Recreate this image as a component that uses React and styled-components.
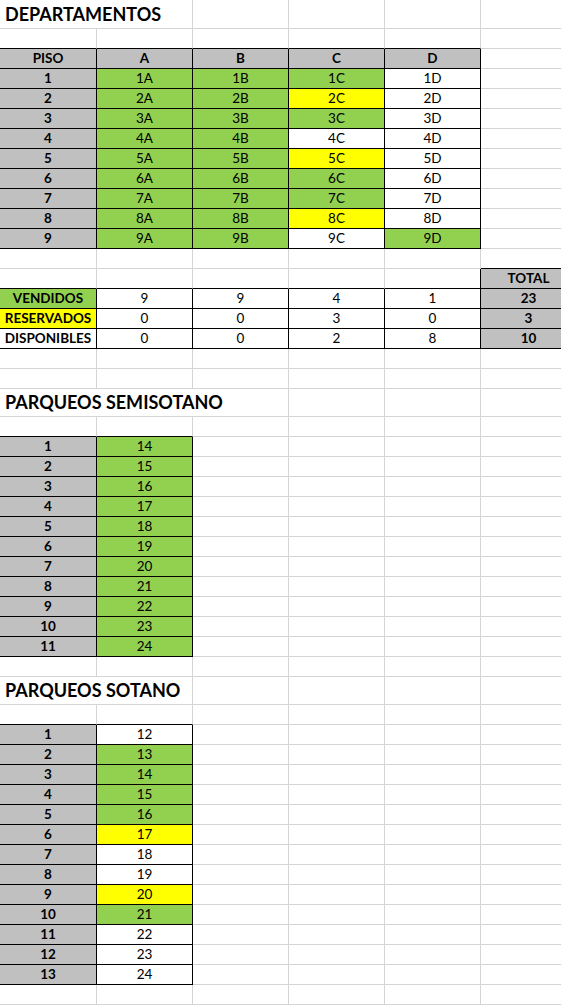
import React from 'react'
import styled, { createGlobalStyle } from 'styled-components'

const GREEN = '#92d050'
const YELLOW = '#ffff00'
const GRAY = '#c0c0c0'
const GRID = '#d4d4d4'

const Global = createGlobalStyle`
  body {
    margin: 0;
    background: #fff;
    overflow: hidden;
  }
`

const Sheet = styled.div`
  width: 561px;
  height: 1005px;
  overflow: hidden;
  font-family: Lato, "Liberation Sans", sans-serif;
  color: #000;
`

const Row = styled.div`
  display: grid;
  grid-template-columns: 97px repeat(5, 96px);
  height: ${p => p.$h}px;
`

const Cell = styled.div`
  box-sizing: border-box;
  grid-column: span ${p => p.$span || 1};
  background: ${p => p.$fill || '#fff'};
  border-right: 1px solid ${p => (p.$rb ? '#000' : GRID)};
  border-bottom: 1px solid ${p => (p.$bb ? '#000' : GRID)};
  font-size: 13.5px;
  font-weight: ${p => (p.$bold ? 700 : 400)};
  display: flex;
  align-items: flex-end;
  justify-content: center;
  padding-bottom: 1px;
  line-height: 17px;
  white-space: nowrap;
`

const Title = styled(Cell)`
  justify-content: flex-start;
  padding-left: 5px;
  padding-bottom: 3px;
  font-size: 18px;
  line-height: 22px;
  font-weight: 700;
`

const dept = [
  'ggg-', 'ggy-', 'ggg-', 'gg--', 'ggy-', 'ggg-', 'ggg-', 'ggy-', 'gg-g'
]
const sotano = 'wggggywwygwww'
const fillOf = c => (c === 'g' ? GREEN : c === 'y' ? YELLOW : undefined)

const blank = () => Array(6).fill(null)
const rows = []
const title = (t, span, h) => {
  const cells = blank()
  cells[0] = { t, span, title: true }
  for (let i = 1; i < span; i++) cells[i] = 'skip'
  rows.push({ h, cells })
}
const empty = () => rows.push({ h: 20, cells: blank() })

title('DEPARTAMENTOS', 2, 29)
empty()
rows.push({
  h: 20,
  cells: ['PISO', 'A', 'B', 'C', 'D'].map(t => ({ t, bold: true, fill: GRAY, box: true })).concat([null])
})
dept.forEach((r, i) => {
  rows.push({
    h: 20,
    cells: [{ t: String(i + 1), bold: true, fill: GRAY, box: true }]
      .concat(['A', 'B', 'C', 'D'].map((l, j) => ({ t: `${i + 1}${l}`, fill: fillOf(r[j]), box: true })))
      .concat([null])
  })
})
empty()
rows.push({ h: 20, cells: [null, null, null, null, null, { t: 'TOTAL', bold: true, fill: GRAY, box: true }] })
;[
  ['VENDIDOS', GREEN, [9, 9, 4, 1], 23],
  ['RESERVADOS', YELLOW, [0, 0, 3, 0], 3],
  ['DISPONIBLES', undefined, [0, 0, 2, 8], 10]
].forEach(([label, fill, nums, total]) => {
  rows.push({
    h: 20,
    cells: [{ t: label, bold: true, fill, box: true }]
      .concat(nums.map(n => ({ t: String(n), box: true })))
      .concat([{ t: String(total), bold: true, fill: GRAY, box: true }])
  })
})
empty()
empty()
title('PARQUEOS SEMISOTANO', 3, 28)
empty()
for (let i = 1; i <= 11; i++) {
  rows.push({
    h: 20,
    cells: [{ t: String(i), bold: true, fill: GRAY, box: true }, { t: String(i + 13), fill: GREEN, box: true }, null, null, null, null]
  })
}
empty()
title('PARQUEOS SOTANO', 2, 28)
empty()
for (let i = 1; i <= 13; i++) {
  rows.push({
    h: 20,
    cells: [{ t: String(i), bold: true, fill: GRAY, box: true }, { t: String(i + 11), fill: fillOf(sotano[i - 1]), box: true }, null, null, null, null]
  })
}
empty()
empty()

const isBox = c => !!(c && c !== 'skip' && c.box)

export default function App() {
  return (
    <Sheet>
      <Global />
      {rows.map((row, i) => {
        const below = rows[i + 1]
        return (
          <Row key={i} $h={row.h}>
            {row.cells.map((c, col) => {
              if (c === 'skip') return null
              const span = (c && c.span) || 1
              const rb = isBox(c) || isBox(row.cells[col + span])
              const bb = isBox(c) || (below && isBox(below.cells[col]))
              if (c && c.title) {
                return <Title key={col} $span={span} $rb={rb} $bb={bb}>{c.t}</Title>
              }
              return (
                <Cell key={col} $fill={c && c.fill} $bold={c && c.bold} $rb={rb} $bb={bb}>
                  {c && c.t}
                </Cell>
              )
            })}
          </Row>
        )
      })}
    </Sheet>
  )
}
